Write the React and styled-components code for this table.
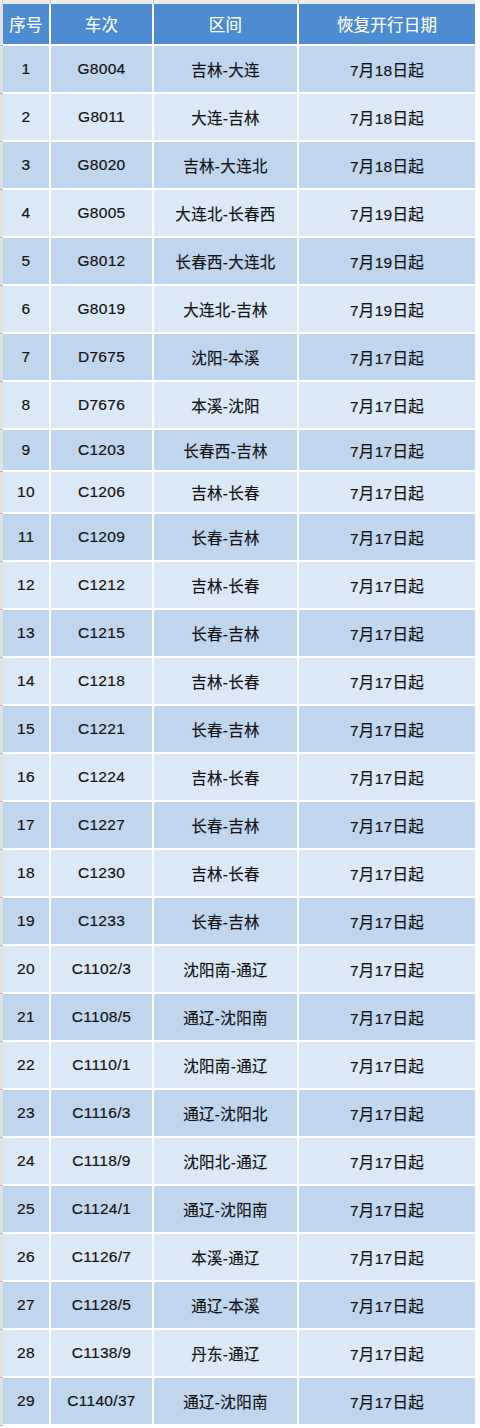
import React from "react";
import styled, { createGlobalStyle } from "styled-components";

const GlobalStyle = createGlobalStyle`
  html, body { margin: 0; padding: 0; background: #ffffff; }
  body { font-family: "Liberation Sans", "Noto Sans CJK SC", sans-serif; }
`;

const rows = [
  ["1", "G8004", "吉林-大连", "7月18日起"],
  ["2", "G8011", "大连-吉林", "7月18日起"],
  ["3", "G8020", "吉林-大连北", "7月18日起"],
  ["4", "G8005", "大连北-长春西", "7月19日起"],
  ["5", "G8012", "长春西-大连北", "7月19日起"],
  ["6", "G8019", "大连北-吉林", "7月19日起"],
  ["7", "D7675", "沈阳-本溪", "7月17日起"],
  ["8", "D7676", "本溪-沈阳", "7月17日起"],
  ["9", "C1203", "长春西-吉林", "7月17日起", true],
  ["10", "C1206", "吉林-长春", "7月17日起", true],
  ["11", "C1209", "长春-吉林", "7月17日起"],
  ["12", "C1212", "吉林-长春", "7月17日起"],
  ["13", "C1215", "长春-吉林", "7月17日起"],
  ["14", "C1218", "吉林-长春", "7月17日起"],
  ["15", "C1221", "长春-吉林", "7月17日起"],
  ["16", "C1224", "吉林-长春", "7月17日起"],
  ["17", "C1227", "长春-吉林", "7月17日起"],
  ["18", "C1230", "吉林-长春", "7月17日起"],
  ["19", "C1233", "长春-吉林", "7月17日起"],
  ["20", "C1102/3", "沈阳南-通辽", "7月17日起"],
  ["21", "C1108/5", "通辽-沈阳南", "7月17日起"],
  ["22", "C1110/1", "沈阳南-通辽", "7月17日起"],
  ["23", "C1116/3", "通辽-沈阳北", "7月17日起"],
  ["24", "C1118/9", "沈阳北-通辽", "7月17日起"],
  ["25", "C1124/1", "通辽-沈阳南", "7月17日起"],
  ["26", "C1126/7", "本溪-通辽", "7月17日起"],
  ["27", "C1128/5", "通辽-本溪", "7月17日起"],
  ["28", "C1138/9", "丹东-通辽", "7月17日起"],
  ["29", "C1140/37", "通辽-沈阳南", "7月17日起"],
];

const Sheet = styled.div`
  width: 475px;
  display: flex;
  flex-direction: column;
`;

const TopStrip = styled.div`
  height: 4px;
  display: grid;
  grid-template-columns: 3px 48px 103px 145px 176px;
  background: #ebebeb;
`;

const StripCell = styled.div`
  border-right: ${(p) => (p.$last ? "none" : "1px solid #c8c8c8")};
`;

const Row = styled.div`
  display: grid;
  grid-template-columns: 3px 48px 103px 145px 176px;
  height: ${(p) => p.$h}px;
  border-bottom: 2px solid #ffffff;
`;

const Gutter = styled.div`
  background: #e2e2e2;
  box-shadow: inset 0 -1px 0 #b9b9b9;
  margin-bottom: -2px;
`;

const Cell = styled.div`
  display: flex;
  align-items: center;
  justify-content: center;
  box-sizing: border-box;
  border-right: ${(p) => (p.$last ? "none" : "2px solid #ffffff")};
  background: ${(p) => p.$bg};
  color: ${(p) => (p.$head ? "#ffffff" : "#141414")};
  font-size: ${(p) => (p.$head ? "16.5px" : "15.5px")};
  letter-spacing: ${(p) => (p.$head ? "0.2px" : "0.3px")};
  -webkit-text-stroke: ${(p) => (p.$head ? "0.1px" : "0.2px")} currentColor;
  white-space: nowrap;
`;

const HEAD = "#4d8cd0";
const DARK = "#c0d6ed";
const LIGHT = "#dbe8f5";

export default function App() {
  return (
    <>
      <GlobalStyle />
      <Sheet>
        <TopStrip>
          <StripCell />
          <StripCell />
          <StripCell />
          <StripCell />
          <StripCell $last />
        </TopStrip>
        <Row $h={40}>
          <Gutter />
          <Cell $head $bg={HEAD}>序号</Cell>
          <Cell $head $bg={HEAD}>车次</Cell>
          <Cell $head $bg={HEAD}>区间</Cell>
          <Cell $head $last $bg={HEAD}>恢复开行日期</Cell>
        </Row>
        {rows.map(([n, train, route, date, short], i) => {
          const bg = i % 2 === 0 ? DARK : LIGHT;
          return (
            <Row key={n} $h={short ? 40 : 46}>
              <Gutter />
              <Cell $bg={bg}>{n}</Cell>
              <Cell $bg={bg}>{train}</Cell>
              <Cell $bg={bg}>{route}</Cell>
              <Cell $bg={bg} $last>{date}</Cell>
            </Row>
          );
        })}
      </Sheet>
    </>
  );
}
